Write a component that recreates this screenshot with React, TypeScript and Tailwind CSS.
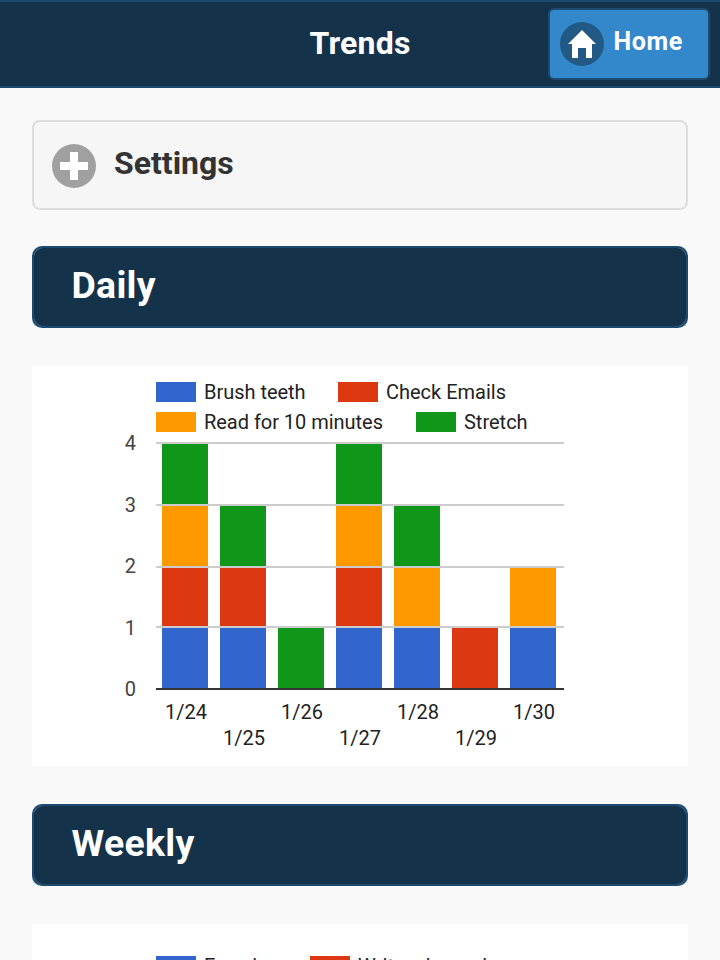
import React from "react";

const BLUE = "#3366cc";
const RED = "#dc3912";
const ORANGE = "#ff9900";
const GREEN = "#109618";

const days: { label: string; stack: string[] }[] = [
  { label: "1/24", stack: [BLUE, RED, ORANGE, GREEN] },
  { label: "1/25", stack: [BLUE, RED, GREEN] },
  { label: "1/26", stack: [GREEN] },
  { label: "1/27", stack: [BLUE, RED, ORANGE, GREEN] },
  { label: "1/28", stack: [BLUE, ORANGE, GREEN] },
  { label: "1/29", stack: [RED] },
  { label: "1/30", stack: [BLUE, ORANGE] },
];

// Top edge of each gridline, from value 0 to 4
const lines = [322, 260, 200, 138, 76];
// Baseline of each value label, evenly spaced
const valueBaselines = [330, 269, 207, 146, 84];

function Legend({ x, y, color, text, width }: { x: number; y: number; color: string; text: string; width: number }) {
  return (
    <g>
      <rect x={x} y={y} width={40} height={20} fill={color} />
      <text x={x + 48} y={y + 17} fontSize={20} fill="#222222" textLength={width}>
        {text}
      </text>
    </g>
  );
}

function DailyChart() {
  return (
    <svg className="block h-[400px] w-full bg-white" viewBox="0 0 656 400">
      <Legend x={124} y={16} color={BLUE} text="Brush teeth" width={101.6} />
      <Legend x={306} y={16} color={RED} text="Check Emails" width={120} />
      <Legend x={124} y={46} color={ORANGE} text="Read for 10 minutes" width={179} />
      <Legend x={384} y={46} color={GREEN} text="Stretch" width={63.6} />
      {days.map((day, i) => (
        <g key={day.label}>
          {day.stack.map((color, level) => (
            <rect
              key={level}
              x={130 + i * 58}
              y={lines[level + 1] + 2}
              width={46}
              height={lines[level] - lines[level + 1]}
              fill={color}
            />
          ))}
          <text x={154 + i * 58} y={i % 2 === 0 ? 353 : 379} fontSize={20} fill="#222222" textAnchor="middle">
            {day.label}
          </text>
        </g>
      ))}
      {lines.map((y, value) => (
        <g key={value}>
          <rect x={124} y={y} width={408} height={2} fill={value === 0 ? "#333333" : "#cccccc"} />
          <text x={104} y={valueBaselines[value]} fontSize={20} fill="#444444" textAnchor="end">
            {value}
          </text>
        </g>
      ))}
    </svg>
  );
}

function SectionTitle({ children }: { children: React.ReactNode }) {
  return (
    <div className="h-[82px] rounded-[10px] border-2 border-[#1d4b70] bg-[#547a9a]">
      <h2 className="flex h-full items-center rounded-[9px] bg-[#14334b] pb-1 pl-[37.5px] text-[37.4px] font-bold tracking-[0.3px] text-white">
        {children}
      </h2>
    </div>
  );
}

export default function App() {
  return (
    <div className="h-[960px] w-[720px] overflow-hidden bg-[#f9f9f9] font-['Roboto',sans-serif]">
      <header className="grid h-[88px] grid-cols-[1fr_auto_1fr] items-center border-y-2 border-[#1d4b70] bg-[#14334b] px-[10px]">
        <span />
        <h1 className="pb-0.5 text-[32px] font-bold tracking-[0.2px] text-white">Trends</h1>
        <button className="flex h-[72px] w-[162px] items-center justify-self-end rounded-md border-2 border-[#1d4b70] bg-[#3388cc] pl-[10px] text-white">
          <svg className="size-11 shrink-0" viewBox="0 0 44 44">
            <circle cx="22" cy="22" r="22" fill="#225a85" />
            <path d="M22 8 8 22h4v14h6V26h8v10h6V22h4Z" fill="#fff" />
          </svg>
          <span className="pb-[5px] pl-[9.5px] text-[25px] font-bold tracking-[0.6px]">Home</span>
        </button>
      </header>
      <main className="px-8 pt-8">
        <button className="flex h-[90px] w-full items-center rounded-lg border-2 border-[#dddddd] bg-[#f6f6f6] pl-[18px] text-[#333333]">
          <svg className="mt-0.5 size-11 shrink-0" viewBox="0 0 44 44">
            <circle cx="22" cy="22" r="22" fill="#a0a0a0" />
            <path d="M18 8h8v10h10v8H26v10h-8V26H8v-8h10Z" fill="#fff" />
          </svg>
          <span className="pb-1 pl-[18px] text-[32px] font-bold">Settings</span>
        </button>
        <section className="pt-9">
          <SectionTitle>Daily</SectionTitle>
          <div className="pt-[38px]">
            <DailyChart />
          </div>
        </section>
        <section className="pt-[38px]">
          <SectionTitle>Weekly</SectionTitle>
          <div className="pt-[38px]">
            <svg className="block h-[400px] w-full bg-white" viewBox="0 0 656 400">
              <Legend x={124} y={32} color={BLUE} text="Exercise" width={74} />
              <Legend x={278} y={32} color={RED} text="Write a journal" width={129} />
            </svg>
          </div>
        </section>
      </main>
    </div>
  );
}
